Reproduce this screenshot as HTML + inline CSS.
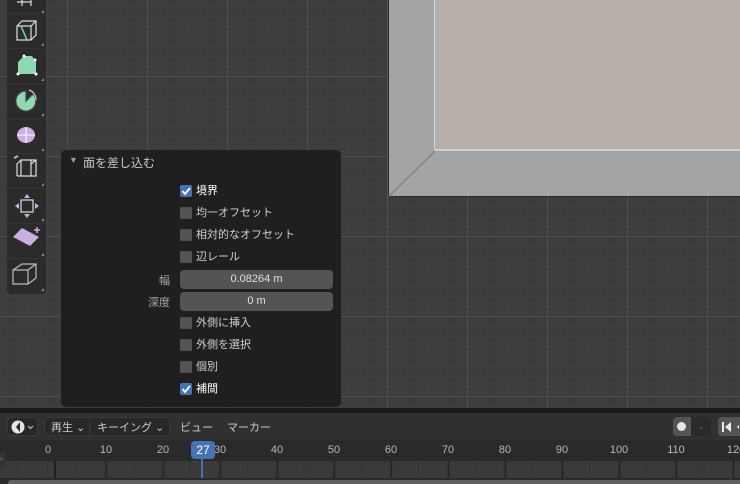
<!DOCTYPE html>
<html><head><meta charset="utf-8"><style>
*{margin:0;padding:0;box-sizing:border-box}
body{width:740px;height:484px;overflow:hidden;background:#3d3d3d;font-family:"Liberation Sans","Noto Sans CJK JP",sans-serif;position:relative;font-size:11px;color:#ddd}
.grid{position:absolute;left:0;top:0;width:740px;height:410px;
background:
linear-gradient(90deg,rgba(82,82,82,.9) 1px,transparent 1px) 67px 0/80px 80px,
linear-gradient(0deg,rgba(82,82,82,.9) 1px,transparent 1px) 0 77px/80px 80px,
linear-gradient(90deg,rgba(68,68,68,.5) 1px,transparent 1px) 7px 0/10px 10px,
linear-gradient(0deg,rgba(68,68,68,.5) 1px,transparent 1px) 0 7px/10px 10px,#3d3d3d}
.abs{position:absolute}
.tbw{position:absolute;left:7px;top:0;width:39px;height:294px;background:#2b2b2b;border-radius:0 0 4px 4px}
.sep{position:absolute;left:7px;width:39px;height:1px;background:#333}
.panel{left:61px;top:150px;width:280px;height:257px;background:#1f1f1f;border-radius:5px}
.cb{position:absolute;left:180px;width:12px;height:12px;border-radius:2px;background:#545454}
.cb.on{background:#4772b3}
.lbl{position:absolute;left:196px;font-size:11px;color:#d0d0d0;line-height:12px}
.fld{position:absolute;left:180px;width:153px;height:19px;background:#545454;border-radius:4px;text-align:center;line-height:19px;color:#e0e0e0}
.num{position:absolute;top:444px;color:#b8b8b8;font-size:11px;transform:translateX(-50%)}
</style></head><body>
<div class="grid"></div>
<!-- mesh -->
<div class="abs" style="left:388px;top:0;width:352px;height:197px;background:#a3a4a6;border-bottom:1px solid #2a2a2a;border-left:1px solid #2a2a2a"></div>
<div class="abs" style="left:434px;top:0;width:306px;height:151px;background:#b7afaa;border-left:1px solid #d8d8d8;border-bottom:2px solid #d0d0d0"></div>
<svg class="abs" style="left:388px;top:150px" width="48" height="48"><line x1="0" y1="47" x2="47" y2="1" stroke="#777" stroke-width="1"/></svg>
<!-- toolbar -->
<div class="tbw"></div>
<div class="sep" style="top:13px"></div><div class="sep" style="top:48px"></div><div class="sep" style="top:83px"></div><div class="sep" style="top:118px"></div><div class="sep" style="top:153px"></div><div class="sep" style="top:188px"></div><div class="sep" style="top:223px"></div><div class="sep" style="top:258px"></div>
<svg class="abs" style="left:0;top:0" width="50" height="300" fill="none" stroke="#ddd" stroke-width="1.2">
<path d="M17 2 H31 M22 6 V0 M31 6 V0" />
<path d="M17 26 L22 21 H36 V35 L31 40 H17 Z M17 26 H31 V40 M31 26 L36 21"/>
<path d="M21 26 L27 40" stroke="#7fd4a4" stroke-width="1.5"/>
<path d="M18 74 L18 62 L24 56 L32 56 L36 62 L36 74 Z" fill="#8fd9b0" stroke="none"/>
<g fill="#fff" stroke="none"><circle cx="18" cy="74" r="1.5"/><circle cx="36" cy="74" r="1.5"/><circle cx="24" cy="56" r="1.5"/><circle cx="35" cy="60" r="1.5"/></g>
<path d="M26 101 L26 91 A10 10 0 1 0 33 94 Z" fill="#8fd9b0" stroke="#444"/>
<path d="M29 90 A10 10 0 0 1 36 100" stroke="#ccc"/>
<ellipse cx="26" cy="135" rx="9" ry="8" fill="#c9b0e0" stroke="none"/>
<path d="M17 135 H35 M26 127 V143" stroke="#fff" stroke-width="1"/>
<path d="M17 176 V164 L21 160 H36 V176 H17 M21 160 V176 M31 160 V176 M31 164 L36 160" />
<path d="M14 158 L18 156" stroke="#c9b0e0" stroke-width="2"/>
<rect x="21" y="200" width="12" height="12"/>
<g fill="#c9b0e0" stroke="none"><path d="M27 194 L24 198 H30 Z M27 218 L24 214 H30 Z M15 206 L19 203 V209 Z M39 206 L35 203 V209 Z"/></g>
<path d="M13 237 L22 228 L39 237 L30 246 Z" fill="#c9b0e0" stroke="none"/>
<path d="M34 230 L40 230 M37 227 V233" stroke="#c9b0e0" stroke-width="1.5"/>
<path d="M13 270 L22 264 H36 V278 L28 284 H13 Z M13 270 H28 V284 M28 270 L36 264" stroke="#bbb"/>
<g fill="#888" stroke="none"><path d="M44 13 l-3 0 l3 -3z M44 46 l-3 0 l3 -3z M44 81 l-3 0 l3 -3z M44 116 l-3 0 l3 -3z M44 151 l-3 0 l3 -3z M44 186 l-3 0 l3 -3z M44 221 l-3 0 l3 -3z M44 256 l-3 0 l3 -3z M44 291 l-3 0 l3 -3z"/></g>
</svg>
<!-- panel -->
<div class="abs panel"></div>
<div class="abs" style="left:69px;top:155px;font-size:9px;color:#999">▼</div>
<div class="abs" style="left:83px;top:154px;font-size:12px;color:#c8c8c8">面を差し込む</div>
<div class="cb on" style="top:185px"></div><div class="lbl" style="top:185px;color:#fff">境界</div>
<div class="cb" style="top:207px"></div><div class="lbl" style="top:207px">均一オフセット</div>
<div class="cb" style="top:229px"></div><div class="lbl" style="top:229px">相対的なオフセット</div>
<div class="cb" style="top:251px"></div><div class="lbl" style="top:251px">辺レール</div>
<div class="abs" style="left:159px;top:272px;color:#aaa">幅</div>
<div class="fld" style="top:270px">0.08264 m</div>
<div class="abs" style="left:148px;top:294px;color:#aaa">深度</div>
<div class="fld" style="top:292px">0 m</div>
<div class="cb" style="top:317px"></div><div class="lbl" style="top:317px">外側に挿入</div>
<div class="cb" style="top:339px"></div><div class="lbl" style="top:339px">外側を選択</div>
<div class="cb" style="top:361px"></div><div class="lbl" style="top:361px">個別</div>
<div class="cb on" style="top:383px"></div><div class="lbl" style="top:383px;color:#fff">補間</div>
<svg class="abs" style="left:180px;top:185px" width="12" height="220" fill="none" stroke="#fff" stroke-width="1.8"><path d="M2.5 6 L5 9 L10 3"/><path d="M2.5 204 L5 207 L10 201"/></svg>
<!-- timeline -->
<div class="abs" style="left:0;top:408px;width:740px;height:5px;background:#1a1a1a"></div>
<div class="abs" style="left:0;top:413px;width:740px;height:27px;background:#303030"></div>
<div class="abs" style="left:7px;top:417px;width:31px;height:19px;background:#282828;border-radius:4px;border:1px solid #3a3a3a"></div>
<svg class="abs" style="left:10px;top:419px" width="26" height="16"><circle cx="8" cy="8" r="6.5" fill="#e6e6e6"/><path d="M10 3 L6 8 L10 13" fill="#282828"/><path d="M18 7 L20.5 9.5 L23 7" stroke="#ccc" fill="none"/></svg>
<div class="abs" style="left:44px;top:417px;width:126px;height:19px;background:#282828;border-radius:4px;border:1px solid #3a3a3a"></div>
<div class="abs" style="left:89px;top:417px;width:1px;height:19px;background:#3a3a3a"></div>
<div class="abs" style="left:51px;top:419px;color:#ccc">再生 ⌄</div>
<div class="abs" style="left:97px;top:419px;color:#ccc">キーイング ⌄</div>
<div class="abs" style="left:180px;top:419px;color:#ccc">ビュー</div>
<div class="abs" style="left:227px;top:419px;color:#ccc">マーカー</div>
<div class="abs" style="left:673px;top:417px;width:18px;height:19px;background:#545454;border-radius:4px 0 0 4px"></div>
<div class="abs" style="left:691px;top:417px;width:20px;height:19px;background:#2a2a2a;border-radius:0 4px 4px 0;color:#666;text-align:center;font-size:9px;line-height:19px">⌄</div>
<div class="abs" style="left:677px;top:422px;width:9px;height:9px;border-radius:50%;background:#e6e6e6"></div>
<div class="abs" style="left:718px;top:417px;width:22px;height:19px;background:#545454;border-radius:4px 0 0 4px"></div>
<svg class="abs" style="left:721px;top:420px" width="19" height="14"><rect x="1" y="2" width="2" height="10" fill="#eee"/><path d="M10 2 L4 7 L10 12Z" fill="#eee"/><path d="M18 5 L16 7 L18 9Z" fill="#eee"/></svg>
<div class="abs" style="left:0;top:440px;width:740px;height:21px;background:#2a2a2a"></div>
<div class="abs" style="left:0;top:461px;width:740px;height:17px;background:repeating-linear-gradient(90deg,#3a3a3a 0,#3a3a3a 27.5px,#333 27.5px,#333 28.5px) 48px 0/57.1px 17px,#3a3a3a"></div>
<div class="abs" style="left:0;top:478px;width:740px;height:6px;background:#2a2a2a"></div>
<div class="abs" style="left:8px;top:480px;width:732px;height:4px;background:#606060;border-radius:3px 0 0 0"></div>
<div class="abs" style="left:0;top:451px;width:6px;height:16px;background:#333;border-radius:0 3px 3px 0;color:#888;font-size:8px;line-height:16px">›</div>
<svg class="abs" style="left:0;top:461px" width="740" height="17">
<g stroke="#222" stroke-width="1.3">
<line x1="55" y1="0" x2="55" y2="17" stroke="#111"/>
<line x1="106.5" y1="0" x2="106.5" y2="17"/><line x1="163.5" y1="0" x2="163.5" y2="17"/><line x1="220.5" y1="0" x2="220.5" y2="17"/><line x1="277.5" y1="0" x2="277.5" y2="17"/><line x1="334.5" y1="0" x2="334.5" y2="17"/><line x1="391.5" y1="0" x2="391.5" y2="17"/><line x1="448.5" y1="0" x2="448.5" y2="17"/><line x1="505.5" y1="0" x2="505.5" y2="17"/><line x1="562.5" y1="0" x2="562.5" y2="17"/><line x1="619.5" y1="0" x2="619.5" y2="17"/><line x1="676.5" y1="0" x2="676.5" y2="17"/><line x1="733.5" y1="0" x2="733.5" y2="17"/>
</g></svg>
<div class="num" style="left:48px">0</div><div class="num" style="left:106px">10</div><div class="num" style="left:163px">20</div><div class="num" style="left:220px">30</div><div class="num" style="left:277px">40</div><div class="num" style="left:334px">50</div><div class="num" style="left:391px">60</div><div class="num" style="left:448px">70</div><div class="num" style="left:505px">80</div><div class="num" style="left:562px">90</div><div class="num" style="left:619px">100</div><div class="num" style="left:676px">110</div><div class="num" style="left:736px">120</div>
<div class="abs" style="left:201px;top:458px;width:2px;height:20px;background:#4772b3"></div>
<div class="abs" style="left:191px;top:441px;width:24px;height:18px;background:#4772b3;border-radius:4px;color:#fff;text-align:center;line-height:18px;font-size:12px">27</div>
</body></html>
